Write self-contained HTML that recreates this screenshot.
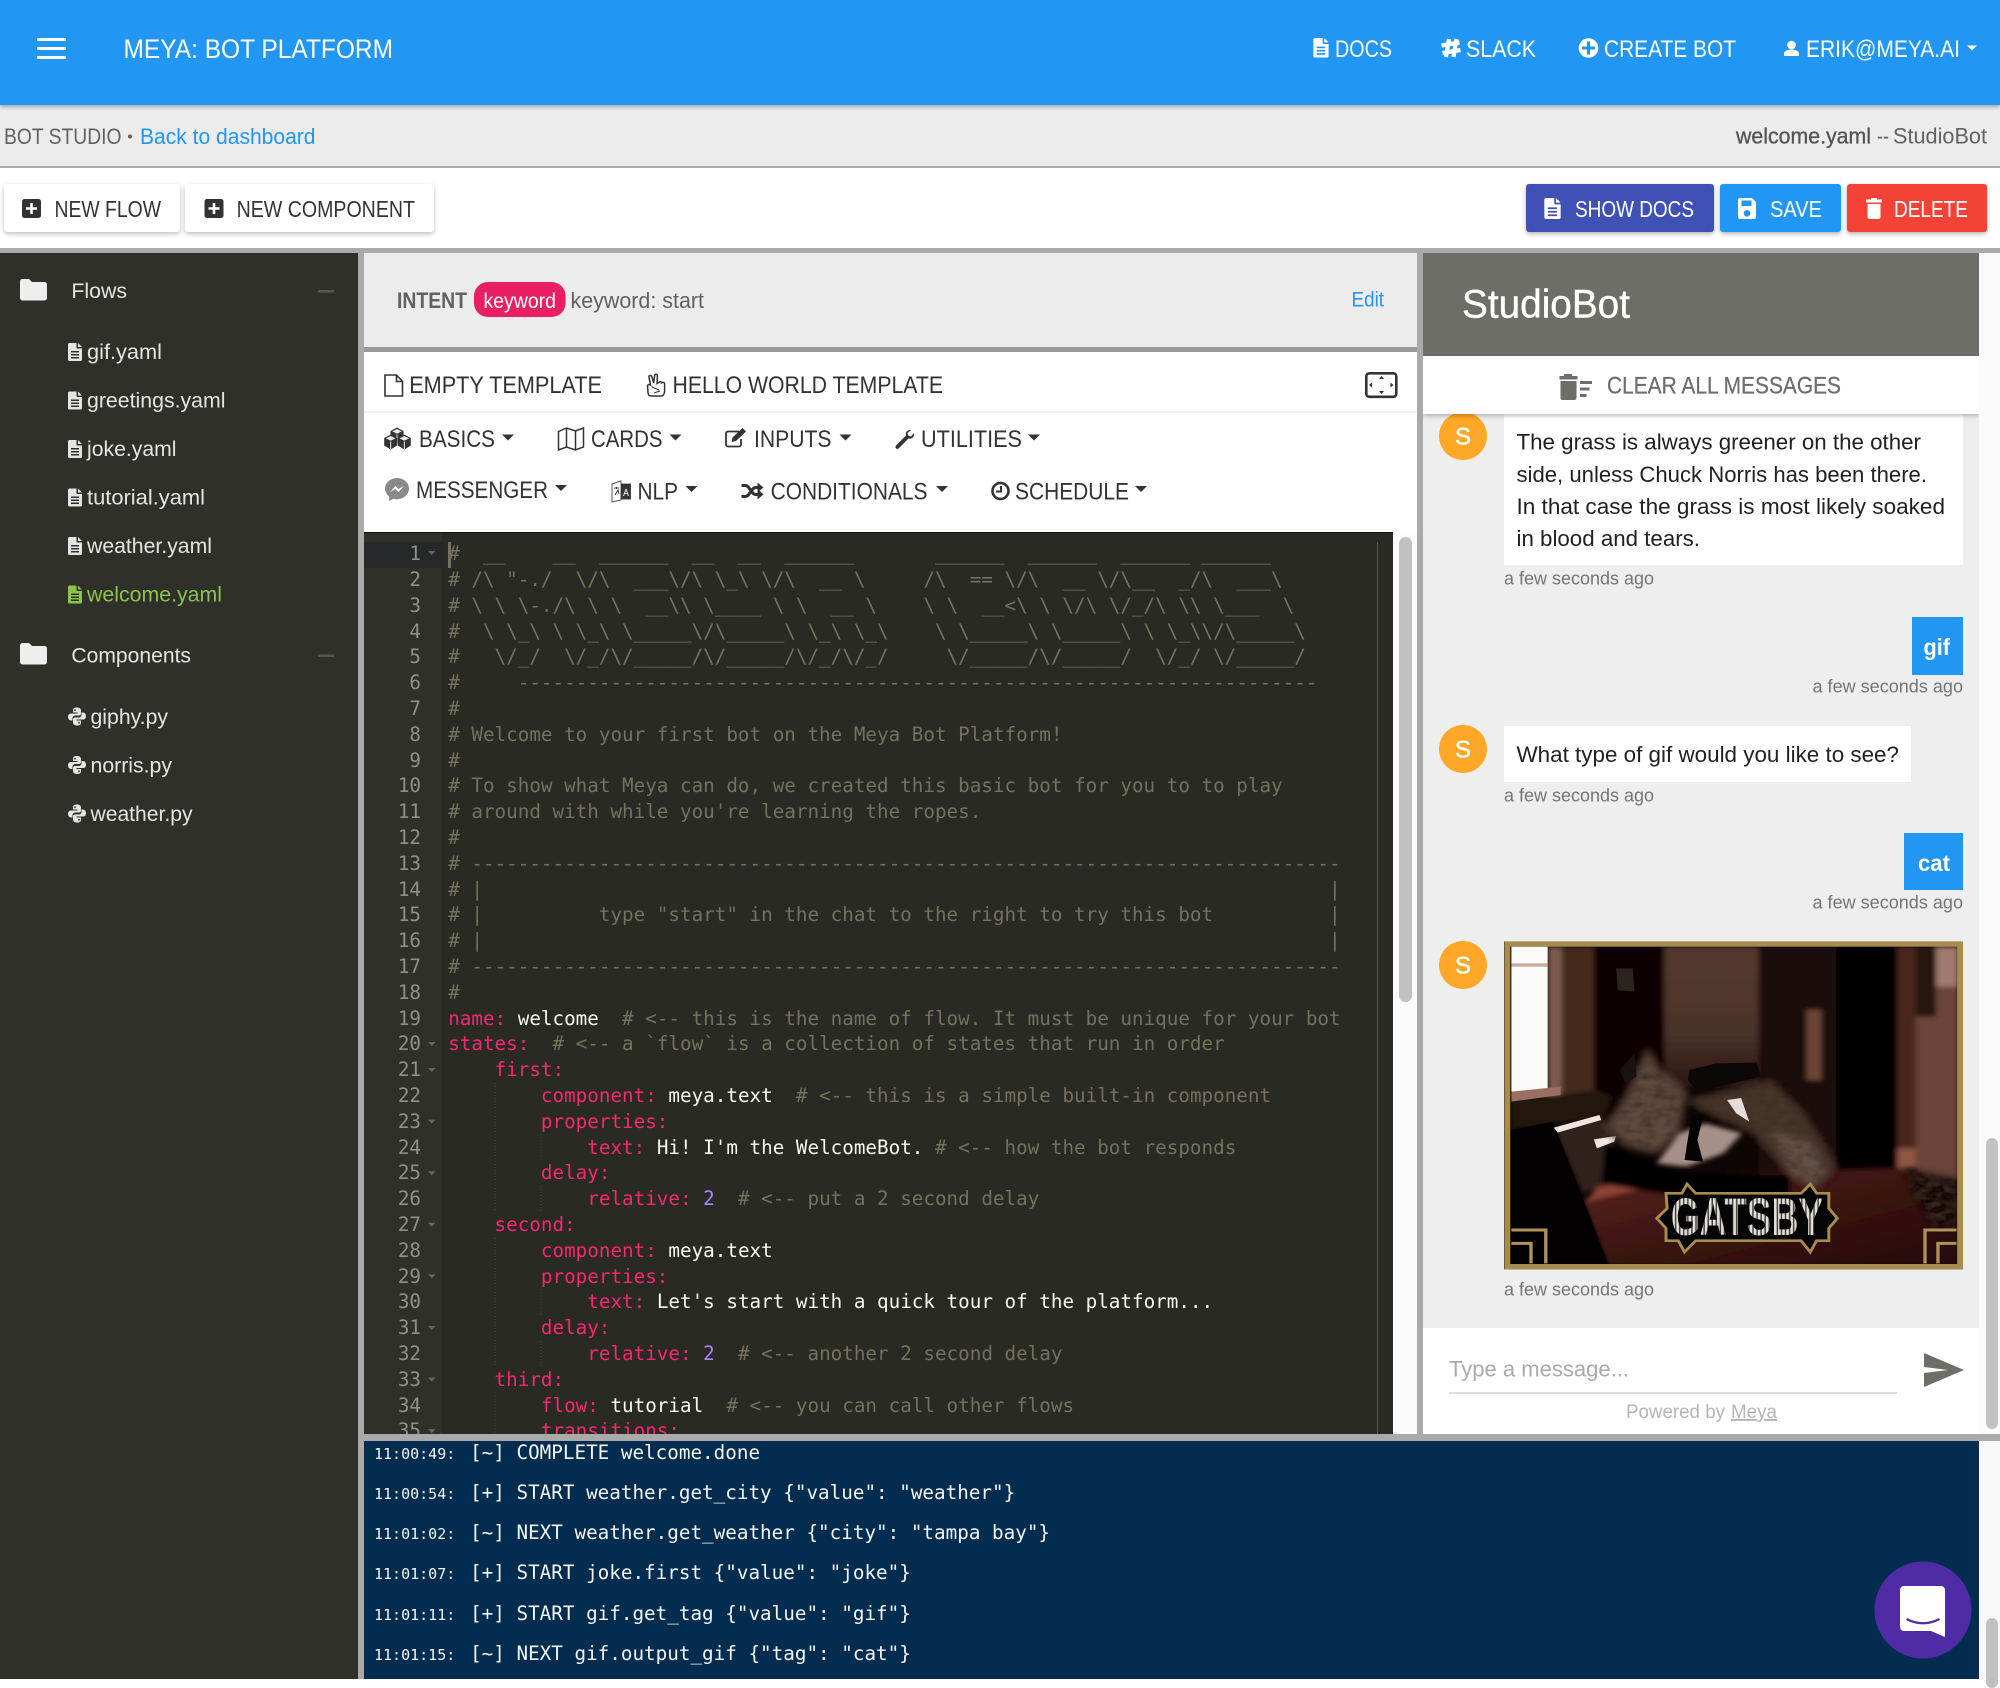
<!DOCTYPE html>
<html lang="en"><head><meta charset="utf-8"><title>StudioBot</title>
<style>
html,body{margin:0;padding:0;width:2000px;height:1679px;overflow:hidden;background:#fff}
div,pre{position:absolute;margin:0;box-sizing:border-box}
#over{left:0;top:0;z-index:9}
svg text{font-family:"Liberation Sans",Arial,sans-serif}
.code{font-family:"DejaVu Sans Mono","Liberation Mono",monospace;font-size:19.26px;line-height:25.8px;white-space:pre;color:#75715e}
.k{color:#f92672}.s{color:#f8f8f2}.n{color:#ae81ff}
.log{font-family:"DejaVu Sans Mono","Liberation Mono",monospace;font-size:19.27px;line-height:40.2px;white-space:pre;color:#f5f5f5}
.log i{font-style:normal;font-size:15px;line-height:0;margin-right:14.8px}
</style></head><body>
<div style="left:0;top:0;width:2000px;height:1679px;background:#aaa"></div>
<div style="left:0;top:105px;width:2000px;height:61px;background:#ececec"></div>
<div style="left:0;top:168px;width:2000px;height:80px;background:#fff"></div>
<div style="left:0;top:0;width:2000px;height:105px;background:#2196f3;box-shadow:0 2px 4px rgba(0,0,0,.3)"></div>
<div style="left:3.5px;top:184px;width:176.5px;height:48px;background:#fff;border-radius:3px;box-shadow:0 2px 5px rgba(0,0,0,.25)"></div>
<div style="left:185px;top:184px;width:248.5px;height:48px;background:#fff;border-radius:3px;box-shadow:0 2px 5px rgba(0,0,0,.25)"></div>
<div style="left:1526px;top:184px;width:188px;height:48px;background:#3f51b5;border-radius:3px;box-shadow:0 2px 5px rgba(0,0,0,.3)"></div>
<div style="left:1720px;top:184px;width:121px;height:48px;background:#2196f3;border-radius:3px;box-shadow:0 2px 5px rgba(0,0,0,.3)"></div>
<div style="left:1847px;top:184px;width:140px;height:48px;background:#f44336;border-radius:3px;box-shadow:0 2px 5px rgba(0,0,0,.3)"></div>
<div style="left:0;top:253px;width:358px;height:1426px;background:#30302b"></div>
<div style="left:364px;top:253px;width:1053px;height:94px;background:#ececec"></div>
<div style="left:364px;top:347px;width:1053px;height:5px;background:#999"></div>
<div style="left:364px;top:352px;width:1053px;height:180px;background:#fff"></div>
<div style="left:364px;top:411px;width:1053px;height:2px;background:#f2f2f2"></div>
<div style="left:1393px;top:532px;width:24px;height:902px;background:#fbfbfb"></div>
<div style="left:1399px;top:537px;width:13px;height:465px;background:#c1c1c1;border-radius:7px"></div>
<div style="left:364px;top:532px;width:1029px;height:902px;background:#292a24;overflow:hidden;border-top:1px solid #111">
 <div style="left:0;top:0;width:77.5px;height:902px;background:#2f3129"></div>
 <div style="left:0;top:9px;width:77.5px;height:25.8px;background:#27282a"></div>
 <div style="left:84px;top:9px;width:3px;height:25.8px;background:#75715e"></div>
 <div style="left:1013px;top:9px;width:1px;height:893px;background:#555"></div>
 <pre class="code" style="left:0;top:8.3px;width:57px;text-align:right;color:#8f908a">1
2
3
4
5
6
7
8
9
10
11
12
13
14
15
16
17
18
19
20
21
22
23
24
25
26
27
28
29
30
31
32
33
34
35</pre>
 <pre class="code" style="left:84.2px;top:8.3px">#  __    __  ______  __  __  ______       ______  ______  ______ ______
# /\ "-./  \/\  ___\/\ \_\ \/\  __ \     /\  == \/\  __ \/\__  _/\  ___\
# \ \ \-./\ \ \  __\\ \____ \ \  __ \    \ \  __&lt;\ \ \/\ \/_/\ \\ \___  \
#  \ \_\ \ \_\ \_____\/\_____\ \_\ \_\    \ \_____\ \_____\ \ \_\\/\_____\
#   \/_/  \/_/\/_____/\/_____/\/_/\/_/     \/_____/\/_____/  \/_/ \/_____/
#     ---------------------------------------------------------------------
#
# Welcome to your first bot on the Meya Bot Platform!
#
# To show what Meya can do, we created this basic bot for you to to play
# around with while you're learning the ropes.
#
# ---------------------------------------------------------------------------
# |                                                                         |
# |          type "start" in the chat to the right to try this bot          |
# |                                                                         |
# ---------------------------------------------------------------------------
#
<span class="k">name:</span> <span class="s">welcome</span>  # &lt;-- this is the name of flow. It must be unique for your bot
<span class="k">states:</span>  # &lt;-- a `flow` is a collection of states that run in order
    <span class="k">first:</span>
        <span class="k">component:</span> <span class="s">meya.text</span>  # &lt;-- this is a simple built-in component
        <span class="k">properties:</span>
            <span class="k">text:</span> <span class="s">Hi! I'm the WelcomeBot.</span> # &lt;-- how the bot responds
        <span class="k">delay:</span>
            <span class="k">relative:</span> <span class="n">2</span>  # &lt;-- put a 2 second delay
    <span class="k">second:</span>
        <span class="k">component:</span> <span class="s">meya.text</span>
        <span class="k">properties:</span>
            <span class="k">text:</span> <span class="s">Let's start with a quick tour of the platform...</span>
        <span class="k">delay:</span>
            <span class="k">relative:</span> <span class="n">2</span>  # &lt;-- another 2 second delay
    <span class="k">third:</span>
        <span class="k">flow:</span> <span class="s">tutorial</span>  # &lt;-- you can call other flows
        <span class="k">transitions:</span></pre>
</div>
<div style="left:364px;top:1441px;width:1615px;height:238px;background:#022d50;overflow:hidden">
 <pre class="log" style="left:10px;top:-8.3px"><i>11:00:49:</i>[~] COMPLETE welcome.done
<i>11:00:54:</i>[+] START weather.get_city {"value": "weather"}
<i>11:01:02:</i>[~] NEXT weather.get_weather {"city": "tampa bay"}
<i>11:01:07:</i>[+] START joke.first {"value": "joke"}
<i>11:01:11:</i>[+] START gif.get_tag {"value": "gif"}
<i>11:01:15:</i>[~] NEXT gif.output_gif {"tag": "cat"}</pre>
</div>
<div style="left:1979px;top:253px;width:21px;height:1181px;background:#fafafa"></div>
<div style="left:1986px;top:1138px;width:12px;height:291px;background:#c1c1c1;border-radius:6px"></div>
<div style="left:1979px;top:1441px;width:21px;height:238px;background:#f8f8f8"></div>
<div style="left:1986px;top:1618px;width:12px;height:70px;background:#c1c1c1;border-radius:6px"></div>
<div style="left:1423px;top:253px;width:556px;height:1181px;background:#eee;overflow:hidden">
 <div style="left:81px;top:161px;width:459px;height:151px;background:#fff"></div>
 <div style="left:489px;top:364px;width:51px;height:58px;background:#2196f3"></div>
 <div style="left:81px;top:473px;width:407px;height:56px;background:#fff"></div>
 <div style="left:481px;top:580px;width:59px;height:57px;background:#2196f3"></div>
 <div style="left:16px;top:159px;width:48px;height:48px;border-radius:50%;background:#ffa726"></div>
 <div style="left:16px;top:472px;width:48px;height:48px;border-radius:50%;background:#ffa726"></div>
 <div style="left:16px;top:688px;width:48px;height:48px;border-radius:50%;background:#ffa726"></div>
 <div style="left:0;top:1075px;width:556px;height:106px;background:#fff"></div>
 <div style="left:0;top:0;width:556px;height:103px;background:#6d6e68"></div>
 <div style="left:0;top:103px;width:556px;height:58px;background:#fff;box-shadow:0 2px 4px rgba(0,0,0,.25)"></div>
 <div style="left:26px;top:1139px;width:448px;height:2px;background:#ddd"></div>
</div>

<svg id="over" style="position:absolute" width="2000" height="1679" viewBox="0 0 2000 1679" xmlns="http://www.w3.org/2000/svg">
<defs>
<symbol id="doc" viewBox="0 0 14 18"><path fill-rule="evenodd" d="M0 1.500A1.500 1.500 0 0 1 1.500 0H8.500v4.500a1 1 0 0 0 1 1H14v11a1.500 1.500 0 0 1-1.500 1.500h-11A1.500 1.500 0 0 1 0 16.500zM3 8v1.500h8V8zM3 11v1.500h8V11zM3 14v1.500h8V14z"/><path d="M10 0l4 4h-4z"/></symbol>
<symbol id="py" viewBox="0 0 18 18"><path fill-rule="evenodd" d="M9 0C5.500 0 5 1.300 5 3v2h4.500v1H3C1 6 0 7.500 0 9.300S1 13 3 13h1.500v-2.200C4.500 9 6 8 7.500 8H11c1.300 0 2-1 2-2V3c0-1.700-1.500-3-4-3zM7 1.800a.9.9 0 1 1-.01 0z"/><path fill-rule="evenodd" transform="rotate(180 9 9)" d="M9 0C5.500 0 5 1.300 5 3v2h4.500v1H3C1 6 0 7.500 0 9.300S1 13 3 13h1.500v-2.200C4.500 9 6 8 7.500 8H11c1.300 0 2-1 2-2V3c0-1.700-1.500-3-4-3zM7 1.800a.9.9 0 1 1-.01 0z"/></symbol>
<symbol id="plus" viewBox="0 0 19 19"><rect width="19" height="19" rx="2.500" fill="#333"/><path d="M8.200 4h2.600v4.200H15v2.600h-4.200V15H8.200v-4.200H4V8.200h4.200z" fill="#fff"/></symbol>
<symbol id="folder" viewBox="0 0 27 22"><path d="M0 3a2.500 2.500 0 0 1 2.500-2.500H9l3 3h12.500A2.500 2.500 0 0 1 27 6v13.500a2.500 2.500 0 0 1-2.500 2.500h-22A2.500 2.500 0 0 1 0 19.500z"/></symbol>
<symbol id="cube" viewBox="0 0 14 15"><path d="M7 0l6.500 3.500v7.500L7 15 .5 11V3.500z" fill="#333"/><path d="M7 1.500l4.800 2.400L7 6.200 2.200 3.900z" fill="#e8e8e8"/><path d="M7 7v7.500" stroke="#fff" stroke-width=".9"/></symbol>
<clipPath id="gifc"><rect x="227" y="124" width="1241" height="984"/></clipPath>
<filter id="bl" x="-5%" y="-5%" width="110%" height="110%"><feGaussianBlur stdDeviation="7"/></filter>
<filter id="fur" x="-5%" y="-5%" width="110%" height="110%"><feGaussianBlur stdDeviation="12" result="b"/><feTurbulence type="fractalNoise" baseFrequency=".03 .05" numOctaves="2" seed="4"/><feColorMatrix values="0 0 0 0 .05 0 0 0 0 .03 0 0 0 0 .02 1.8 0 0 0 -.65"/><feComposite in2="b" operator="in" result="n"/><feMerge><feMergeNode in="b"/><feMergeNode in="n"/></feMerge></filter>
<linearGradient id="wall" x1="0" y1="0" x2="0" y2="1"><stop offset="0" stop-color="#54392f"/><stop offset=".6" stop-color="#4c3229"/><stop offset="1" stop-color="#2b1713"/></linearGradient>
<linearGradient id="tbl" x1="0" y1="0" x2="1" y2="1"><stop offset="0" stop-color="#5d2620"/><stop offset=".5" stop-color="#3a1310"/><stop offset="1" stop-color="#260d0b"/></linearGradient>
<pattern id="stripe" width="11" height="10" patternUnits="userSpaceOnUse"><rect width="11" height="10" fill="#45423d"/><rect width="7" height="10" fill="#e3e0d8"/></pattern>
</defs>

<!-- header -->
<path d="M37 38h29v3H37zM37 47h29v3H37zM37 56h29v3H37z" fill="#fff"/>
<g fill="#fff">
<text x="123.500" y="58" font-size="27" textLength="269.500" lengthAdjust="spacingAndGlyphs">MEYA: BOT PLATFORM</text>
<use href="#doc" x="1313" y="38" width="16" height="19.500"/>
<text x="1335" y="57" font-size="24" textLength="57" lengthAdjust="spacingAndGlyphs">DOCS</text>
<path d="M1449 39l-3 18M1456.500 39l-3 18M1441.500 45.500l18-3M1442.500 53l18-3" stroke="#fff" stroke-width="4.200" fill="none"/>
<text x="1466" y="57" font-size="24" textLength="70" lengthAdjust="spacingAndGlyphs">SLACK</text>
<circle cx="1588.500" cy="48" r="9.800"/><path d="M1587 41.500h3v5h5v3h-5v5h-3v-5h-5v-3h5z" fill="#2196f3"/>
<text x="1604" y="57" font-size="24" textLength="132" lengthAdjust="spacingAndGlyphs">CREATE BOT</text>
<circle cx="1791.500" cy="45" r="4.300"/><path d="M1784 56v-2.500c0-2.800 4.500-4 7.500-4s7.500 1.200 7.500 4V56z"/>
<text x="1806" y="57" font-size="24" textLength="154" lengthAdjust="spacingAndGlyphs">ERIK@MEYA.AI</text>
<path d="M1967 45.500h10l-5 5z"/>
</g>

<!-- sub header -->
<g font-size="22.300">
<text x="4" y="144" fill="#616161" textLength="117.500" lengthAdjust="spacingAndGlyphs">BOT STUDIO</text>
<circle cx="130" cy="136.500" r="2" fill="#616161"/>
<text x="140" y="144" fill="#2196f3" textLength="175.500" lengthAdjust="spacingAndGlyphs">Back to dashboard</text>
<text x="1736" y="143.500" fill="#555" stroke="#555" stroke-width=".35" textLength="135" lengthAdjust="spacingAndGlyphs">welcome.yaml</text>
<text x="1877" y="143.500" fill="#616161" textLength="12" lengthAdjust="spacingAndGlyphs">--</text>
<text x="1893" y="143.500" fill="#616161" textLength="94" lengthAdjust="spacingAndGlyphs">StudioBot</text>
</g>

<!-- toolbar -->
<use href="#plus" x="22" y="199" width="19" height="19"/>
<text x="54.500" y="217" font-size="23" fill="#333" textLength="106.500" lengthAdjust="spacingAndGlyphs">NEW FLOW</text>
<use href="#plus" x="204.500" y="199" width="19" height="19"/>
<text x="236.600" y="217" font-size="23" fill="#333" textLength="178.400" lengthAdjust="spacingAndGlyphs">NEW COMPONENT</text>
<g fill="#fff" font-size="23">
<use href="#doc" x="1544" y="198" width="17" height="21"/>
<text x="1575" y="217" textLength="119" lengthAdjust="spacingAndGlyphs">SHOW DOCS</text>
<path fill-rule="evenodd" d="M1738 200a2 2 0 0 1 2-2h12l4 4v15a2 2 0 0 1-2 2h-14a2 2 0 0 1-2-2zM1741.500 200.500v5.500h10v-5.500zM1747 210a3.300 3.300 0 1 0 .01 0z"/>
<text x="1770" y="217" textLength="52" lengthAdjust="spacingAndGlyphs">SAVE</text>
<path d="M1871 198h6v1.500h5v3h-16v-3h5zM1867.500 204h13v13a2 2 0 0 1-2 2h-9a2 2 0 0 1-2-2z"/>
<text x="1894" y="217" textLength="74" lengthAdjust="spacingAndGlyphs">DELETE</text>
</g>

<!-- sidebar -->
<g fill="#eeeeee">
<use href="#folder" x="20" y="278.500" width="27" height="22"/>
<use href="#folder" x="20" y="642.500" width="27" height="22"/>
</g>
<path d="M318 290h16v2.500h-16zM318 654.500h16v2.500h-16z" fill="#55564f"/>
<g fill="#e4e4e4" font-size="21">
<text x="71.400" y="298" textLength="55.600" lengthAdjust="spacingAndGlyphs">Flows</text>
<text x="71.400" y="662.500" textLength="119.600" lengthAdjust="spacingAndGlyphs">Components</text>
<use href="#doc" x="68" y="343" width="14" height="18"/>
<use href="#doc" x="68" y="391.500" width="14" height="18"/>
<use href="#doc" x="68" y="440" width="14" height="18"/>
<use href="#doc" x="68" y="488.500" width="14" height="18"/>
<use href="#doc" x="68" y="537" width="14" height="18"/>
<text x="87" y="359" textLength="75" lengthAdjust="spacingAndGlyphs">gif.yaml</text>
<text x="87" y="407.500" textLength="138.500" lengthAdjust="spacingAndGlyphs">greetings.yaml</text>
<text x="87" y="456" textLength="89.500" lengthAdjust="spacingAndGlyphs">joke.yaml</text>
<text x="87" y="504.500" textLength="118" lengthAdjust="spacingAndGlyphs">tutorial.yaml</text>
<text x="87" y="553" textLength="125" lengthAdjust="spacingAndGlyphs">weather.yaml</text>
<use href="#py" x="68" y="707.500" width="18" height="18"/>
<use href="#py" x="68" y="756" width="18" height="18"/>
<use href="#py" x="68" y="804.500" width="18" height="18"/>
<text x="90.500" y="724" textLength="77.500" lengthAdjust="spacingAndGlyphs">giphy.py</text>
<text x="90.500" y="772.500" textLength="81.500" lengthAdjust="spacingAndGlyphs">norris.py</text>
<text x="90.500" y="821" textLength="102" lengthAdjust="spacingAndGlyphs">weather.py</text>
</g>
<use href="#doc" x="68" y="585.500" width="14" height="18" fill="#8bc34a"/>
<text x="87" y="601.500" font-size="21" fill="#8bc34a" textLength="135" lengthAdjust="spacingAndGlyphs">welcome.yaml</text>

<!-- intent -->
<text x="397" y="308" font-size="22" font-weight="700" fill="#616161" textLength="70" lengthAdjust="spacingAndGlyphs">INTENT</text>
<rect x="474" y="282" width="91.600" height="35" rx="14" fill="#e91e63"/>
<text x="483.500" y="308" font-size="21" fill="#fff" textLength="72.500" lengthAdjust="spacingAndGlyphs">keyword</text>
<text x="570.500" y="308" font-size="22" fill="#616161" textLength="133.500" lengthAdjust="spacingAndGlyphs">keyword: start</text>
<text x="1351.500" y="306.500" font-size="21" fill="#2196f3" textLength="32.500" lengthAdjust="spacingAndGlyphs">Edit</text>

<!-- template bar -->
<path d="M385 375h11.500l6 6.500V396h-17.500zM396.500 375v6.500h6" fill="none" stroke="#333" stroke-width="1.600"/>
<text x="409.200" y="393" font-size="24" fill="#333" textLength="192.800" lengthAdjust="spacingAndGlyphs">EMPTY TEMPLATE</text>
<path d="M651 396c-2 0-3-1.500-3-4l-.5-6c0-1.500 2-2 3-1l-1.500-8c-.3-1.500 2-2.200 2.700-.7l2 6.500 1-7.500c.2-1.600 2.700-1.400 2.700.2l-.3 8 2.500-1.500c1.500-.5 2 .5 2 .8 1.500-1 3-.3 3 1.200v7c0 3-1.500 5-3.500 5z" fill="none" stroke="#333" stroke-width="1.500"/>
<path d="M652 387l7 3M654 393l6-2" stroke="#333" stroke-width="1.100" fill="none"/>
<text x="672.500" y="393" font-size="24" fill="#333" textLength="270.500" lengthAdjust="spacingAndGlyphs">HELLO WORLD TEMPLATE</text>
<rect x="1366.300" y="373.300" width="30" height="23.500" rx="3" fill="none" stroke="#333" stroke-width="2.600"/>
<path d="M1379 379h5l-2.500-3zM1379 391h5l-2.500 3zM1372 382.500v5l-3-2.500zM1390.500 382.500v5l3-2.500z" fill="#333"/>

<!-- action rows -->
<g fill="#333" font-size="24">
<use href="#cube" x="390" y="427.500" width="14" height="15"/>
<use href="#cube" x="383.700" y="434.500" width="14" height="15"/>
<use href="#cube" x="397.300" y="434.500" width="14" height="15"/>
<text x="419" y="447" textLength="76" lengthAdjust="spacingAndGlyphs">BASICS</text>
<path d="M502 434.500h12l-6 6z"/>
<path d="M558.500 431.500l8-3.500 9 3 8-3v19l-8 3-9-3-8 3zM566.500 428v19M575.500 431v19" fill="none" stroke="#333" stroke-width="1.500"/>
<text x="591" y="447" textLength="71.500" lengthAdjust="spacingAndGlyphs">CARDS</text>
<path d="M669.500 434.500h12l-6 6z"/>
<path d="M741 439v5.500a2 2 0 0 1-2 2h-11a2 2 0 0 1-2-2v-11a2 2 0 0 1 2-2h11" fill="none" stroke="#333" stroke-width="1.800"/>
<path d="M731.500 442l1-4.500 10-9.500 3.500 3.500-10 9.500z"/>
<text x="754" y="447" textLength="77.500" lengthAdjust="spacingAndGlyphs">INPUTS</text>
<path d="M839.500 434.500h12l-6 6z"/>
<path d="M896 445.500l10-10c-1-3.500 2-6 5-5.500l-3.500 3 .8 2.700 2.700.8 3-3.500c.7 3.500-2 6.500-5.500 5.500l-10 10c-1.800 1.500-4-1-2.500-3z"/>
<text x="921" y="447" textLength="101" lengthAdjust="spacingAndGlyphs">UTILITIES</text>
<path d="M1028 434.500h12l-6 6z"/>

<path d="M397 478c-6.500 0-12 4.800-12 10.500 0 3.200 1.700 6 4.200 8v4.500l4.200-2.300c1.100.3 2.400.5 3.600.5 6.500 0 12-4.800 12-10.700S403.500 478 397 478z" fill="#8a8a8a"/>
<path d="M390 492l5.500-6 3 3 5.500-3-5.500 6-3-3z" fill="#fff"/>
<text x="416" y="498" textLength="132" lengthAdjust="spacingAndGlyphs">MESSENGER</text>
<path d="M555 485h12l-6 6z"/>
<path d="M612 484l9-3v19l-9 2zM621 484h9.500v15h-9.500z" fill="none" stroke="#555" stroke-width="1"/>
<rect x="621" y="484" width="9.500" height="15" fill="#333"/>
<path d="M614 488h5M616.500 487v2M615 495l3-5 1 4" stroke="#333" stroke-width="1" fill="none"/>
<text x="623" y="496" font-size="10" fill="#fff" textLength="6" lengthAdjust="spacingAndGlyphs">A</text>
<text x="637.500" y="499.500" textLength="40.500" lengthAdjust="spacingAndGlyphs">NLP</text>
<path d="M685.500 486h12l-6 6z"/>
<path d="M741.500 485.500h4c4 0 6 9 10 9h3M741.500 496.500h4c4 0 6-9 10-9h3" fill="none" stroke="#333" stroke-width="3"/>
<path d="M757.500 482.500l6 5-6 5zM757.500 489l6 5.500-6 5z"/>
<text x="770.600" y="499.500" textLength="156.900" lengthAdjust="spacingAndGlyphs">CONDITIONALS</text>
<path d="M936 486h12l-6 6z"/>
<circle cx="1000.500" cy="491" r="8" fill="none" stroke="#333" stroke-width="2.600"/>
<path d="M1001 486v5.500h-5" fill="none" stroke="#333" stroke-width="2"/>
<text x="1015" y="499.500" textLength="114" lengthAdjust="spacingAndGlyphs">SCHEDULE</text>
<path d="M1135 486h12l-6 6z"/>
</g>

<!-- fold widgets + indent guides -->
<g fill="#666">
<path d="M428 551h7.500l-3.750 4zM428 1042h7.500l-3.750 4zM428 1068h7.500l-3.750 4zM428 1119.600h7.500l-3.750 4zM428 1171.200h7.500l-3.750 4zM428 1222.800h7.500l-3.750 4zM428 1274.400h7.500l-3.750 4zM428 1326h7.500l-3.750 4zM428 1377.600h7.500l-3.750 4zM428 1429h7.500l-3.750 4z"/>
</g>
<g stroke="#4a4b45" stroke-width="1" stroke-dasharray="1 2" fill="none">
<path d="M495 1083v129M495 1238v129M495 1392.500v41.500M541 1134.500v26M541 1186v26M541 1289.500v26M541 1341v26"/>
</g>

<!-- chat -->
<text x="1462" y="317.500" font-size="40" fill="#fff" stroke="#fff" stroke-width=".4" textLength="168" lengthAdjust="spacingAndGlyphs">StudioBot</text>
<path d="M1564 374h8v2h5.500v3.500h-18V376h4.500zM1560.500 381h16v17a2 2 0 0 1-2 2h-12a2 2 0 0 1-2-2zM1580 381h12v3h-12zM1580 387.500h9.500v3H1580zM1580 394h6.500v3h-6.500z" fill="#6d6e68"/>
<text x="1607" y="393.300" font-size="24" fill="#6d6e68" stroke="#6d6e68" stroke-width=".25" textLength="234" lengthAdjust="spacingAndGlyphs">CLEAR ALL MESSAGES</text>

<g font-size="22.500" fill="#212121">
<text x="1516.500" y="449.300" textLength="404.500" lengthAdjust="spacingAndGlyphs">The grass is always greener on the other</text>
<text x="1516.500" y="481.800" textLength="410.500" lengthAdjust="spacingAndGlyphs">side, unless Chuck Norris has been there.</text>
<text x="1516.500" y="514" textLength="428.500" lengthAdjust="spacingAndGlyphs">In that case the grass is most likely soaked</text>
<text x="1516.500" y="546" textLength="183.500" lengthAdjust="spacingAndGlyphs">in blood and tears.</text>
<text x="1516.500" y="762" textLength="382.500" lengthAdjust="spacingAndGlyphs">What type of gif would you like to see?</text>
</g>
<g fill="#fff" font-size="23" font-weight="700">
<text x="1923.500" y="655" textLength="26.500" lengthAdjust="spacingAndGlyphs">gif</text>
<text x="1918" y="871" textLength="32" lengthAdjust="spacingAndGlyphs">cat</text>
</g>
<g font-size="18.500" fill="#757575">
<text x="1504" y="584.500" textLength="150" lengthAdjust="spacingAndGlyphs">a few seconds ago</text>
<text x="1812.500" y="692.500" textLength="150.500" lengthAdjust="spacingAndGlyphs">a few seconds ago</text>
<text x="1504" y="801.500" textLength="150" lengthAdjust="spacingAndGlyphs">a few seconds ago</text>
<text x="1812.500" y="908.500" textLength="150.500" lengthAdjust="spacingAndGlyphs">a few seconds ago</text>
<text x="1504" y="1295.500" textLength="150" lengthAdjust="spacingAndGlyphs">a few seconds ago</text>
</g>
<g fill="#fff" stroke="#fff" stroke-width=".5" font-size="24" text-anchor="middle">
<text x="1463" y="444.500">S</text>
<text x="1463" y="757.500">S</text>
<text x="1463" y="973.500">S</text>
</g>

<!-- gif -->
<g transform="translate(1420 900) scale(.36996 .33333)" clip-path="url(#gifc)">
<rect x="227" y="124" width="1241" height="984" fill="#0d0605"/>
<g filter="url(#bl)">
<rect x="660" y="140" width="255" height="420" fill="url(#wall)"/>
<rect x="380" y="140" width="95" height="445" fill="#44291f"/>
<rect x="345" y="140" width="38" height="450" fill="#7d5a4e"/>
<rect x="470" y="140" width="190" height="450" fill="#090403"/>
<rect x="915" y="140" width="210" height="680" fill="#1f0d0a"/>
<rect x="1045" y="330" width="40" height="210" fill="#6b4436"/>
<rect x="1125" y="140" width="165" height="680" fill="#030101"/>
<rect x="1290" y="140" width="50" height="660" fill="#4a281e"/>
<rect x="1290" y="745" width="50" height="60" fill="#8d5643"/>
<rect x="1340" y="140" width="115" height="700" fill="#6b4538"/>
<rect x="1340" y="140" width="55" height="210" fill="#261410"/>
<rect x="1395" y="140" width="60" height="120" fill="#a07a6c"/>
<path d="M247 600L480 570 520 590 500 650 247 690z" fill="#241210"/>
<path d="M365 690L490 645 530 715 490 860 440 880z" fill="#33211c"/>
<path d="M440 900L650 825 1300 805 1455 860V1095H510z" fill="url(#tbl)"/>
<path d="M480 860L655 825 640 855 450 905z" fill="#8e4236"/>
<path d="M500 730L700 820 1000 820 1000 900 650 880 490 850z" fill="#050202"/>
</g>
<rect x="247" y="140" width="98" height="435" fill="#fbfbfb"/>
<rect x="247" y="190" width="98" height="10" fill="#c9a99b"/>
<path d="M247 575L380 560 380 585 247 605z" fill="#9a6f61"/>
<path d="M247 690L360 665 510 1095H247z" fill="#030101"/>
<path d="M362 683L485 645 490 660 372 698zM470 718L530 708 525 725 478 745z" fill="#efe6e0"/>
<g filter="url(#fur)">
<path d="M615 440L650 510 720 570 700 700 640 760 560 740 500 680 550 600z" fill="#5e483c"/>
<path d="M720 600L950 540 1040 640 1130 800 1070 870 1000 830 900 700 780 640z" fill="#463629"/>
<path d="M950 690L1060 730 1100 820 1060 860 1000 820z" fill="#635044"/>
<path d="M1310 810L1450 840V980H1390L1340 880z" fill="#15100e"/>
</g>
<path d="M640 790L720 800 820 760 870 700 770 670 700 700z" fill="#a78f89" filter="url(#bl)"/>
<path d="M728 510L800 490 910 488 922 530 810 560 750 575 724 540z" fill="#0c0807"/>
<path d="M830 600L868 594 890 665 855 640z" fill="#e8dcd8"/>
<path d="M735 640L765 650 750 720 765 785 715 780 725 710z" fill="#050303"/>
<path d="M540 510L580 460 585 530 555 550z" fill="#1a1210"/>
<path d="M530 205L575 205 580 275 535 270z" fill="#2b2320"/>
<!-- frame -->
<rect x="236" y="132" width="1224" height="968" fill="none" stroke="#a88b4f" stroke-width="16"/>
<path d="M247 990H340V1090M247 1030H300V1090M1450 990H1365V1090M1450 1030H1400V1090" fill="none" stroke="#b0925a" stroke-width="9"/>
<!-- badge -->
<path d="M640 955L668 925 665 880 708 880 722 852 745 880 1030 880 1055 852 1072 880 1105 880 1105 925 1128 955 1105 985 1105 1022 1072 1022 1055 1056 1030 1022 745 1022 715 1056 698 1022 665 1022 665 985z" fill="#050505" stroke="#a88b4f" stroke-width="8"/>
<text x="678" y="1005" font-size="158" font-weight="700" fill="url(#stripe)" textLength="412" lengthAdjust="spacingAndGlyphs">GATSBY</text>
</g>

<!-- composer -->
<text x="1449" y="1376.700" font-size="22.500" fill="#aaa" textLength="180" lengthAdjust="spacingAndGlyphs">Type a message...</text>
<path d="M1924 1353L1964 1370 1924 1387V1373L1948 1370 1924 1367z" fill="#6d6e68"/>
<text x="1626" y="1418" font-size="19" fill="#b5b5b5" textLength="99" lengthAdjust="spacingAndGlyphs">Powered by</text>
<text x="1731" y="1418" font-size="19" fill="#b5b5b5" text-decoration="underline" textLength="46" lengthAdjust="spacingAndGlyphs">Meya</text>

<!-- intercom -->
<circle cx="1923" cy="1610" r="48.500" fill="#4f2ca5"/>
<path d="M1900 1590a4 4 0 0 1 4-4h37a4 4 0 0 1 4 4v47l-14-6h-27a4 4 0 0 1-4-4z" fill="#fff"/>
<path d="M1906.500 1619q16.500 8.500 33 0" fill="none" stroke="#4f2ca5" stroke-width="2.200"/>
</svg>
</body></html>
